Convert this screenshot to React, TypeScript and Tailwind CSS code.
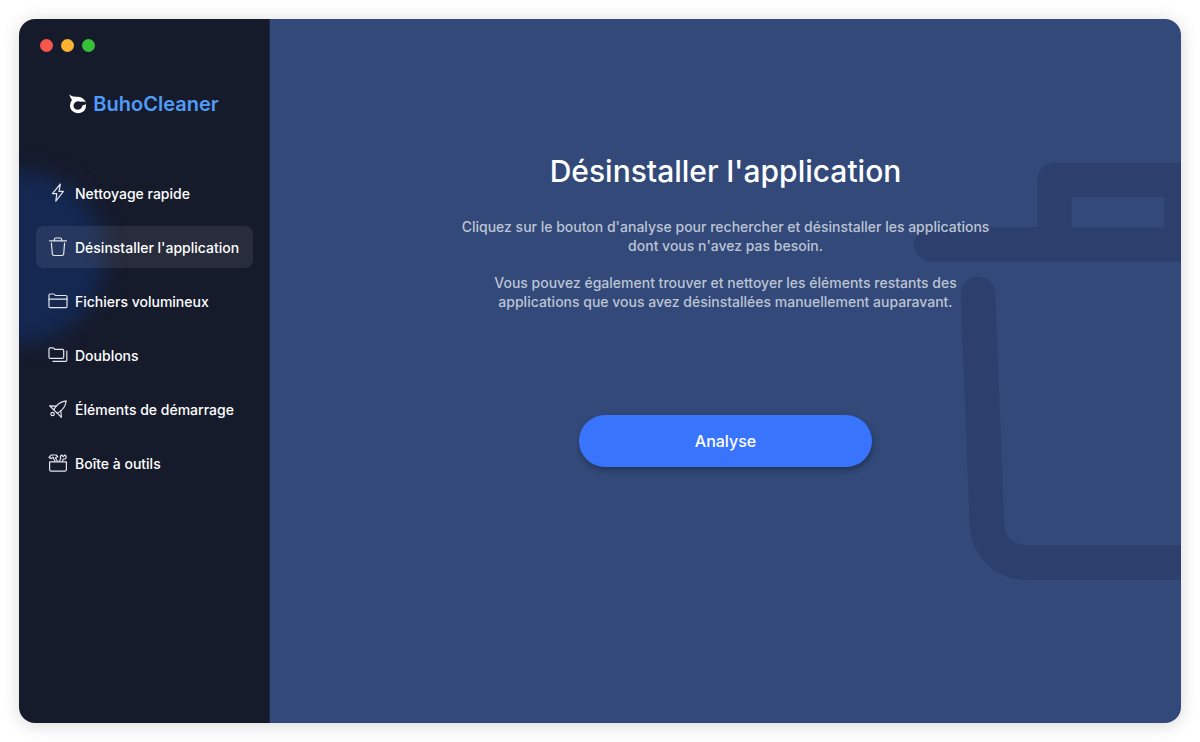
import type { ReactNode } from 'react'

interface NavItem {
  label: string
  icon: ReactNode
}

const NAV_ITEMS: NavItem[] = [
  {
    label: 'Nettoyage rapide',
    icon: <path d="M12.4 1 4.4 10.6h4.400l-1 7.600 7.600-9.800H11z" />,
  },
  {
    label: "Désinstaller l'application",
    icon: (
      <>
        <path d="M1.6 3.8h16.8M6.4 3.6V2.4Q6.4 1 7.8 1h4.400q1.400 0 1.400 1.400v1.200" />
        <path d="m3.400 6 .9 10.800q.1 1.700 1.800 1.700h7.800q1.700 0 1.800-1.700L16.600 6" />
      </>
    ),
  },
  {
    label: 'Fichiers volumineux',
    icon: (
      <>
        <path d="M1 15.400V4q0-1 1-1h3.600q.6 0 1 .5l.8 1h10.400q1.200 0 1.200 1.100v9.800q0 1.200-1.200 1.200H2.200Q1 16.600 1 15.400z" />
        <path d="M1 8.200h18" />
      </>
    ),
  },
  {
    label: 'Doublons',
    icon: (
      <>
        <path d="M1 12.200V4q0-1.200 1.200-1.200h2.700q.6 0 1 .5l.8 1h7.800q1.200 0 1.200 1.200v6.700q0 1.200-1.200 1.200H2.200Q1 13.400 1 12.200z" />
        <path d="M18.800 6v9.200q0 1.200-1.200 1.200H5" />
      </>
    ),
  },
  {
    label: 'Éléments de démarrage',
    icon: (
      <>
        <path d="M5.800 10.800Q9.400 3 18.200 1.800 17.200 10.400 9.200 14.200z" />
        <path d="M8.200 7.200 1.600 6.800l4.200 4M12.800 11.800l.6 6.600-4.200-4.200" />
        <circle cx="4.600" cy="15" r="1.700" />
      </>
    ),
  },
  {
    label: 'Boîte à outils',
    icon: (
      <>
        <path d="M1.600 8.800h16.800v7.800q0 1.600-1.600 1.600H3.200q-1.600 0-1.600-1.600z" />
        <path d="M1 4.400 3.400 2h4.800l1.600 1.600-2.400 1.200 2 3.400M1 4.400l2.200 1.200L5 4.200l2 4" />
        <path d="m11.200 8.200 1.600-2.600Q11.600 3.400 13.600 2l1.600 1.600L17 2q2.200 2.200.4 3.800l-2 .2-1 2.200" />
      </>
    ),
  },
]

function BuhoLogo() {
  return (
    <svg viewBox="0 0 18 20" className="h-5 w-[18px]" aria-hidden="true">
      <path
        fill="#fff"
        d="M.3.6Q3 3.200 8.200 2.800q6.200 0 8.800 5.600-2.600-1.600-5.200-.6Q8.800 6.600 6 8.400q-2.300 2.300-1.100 5 1.600 2.700 4.700 2.200 3.100-.6 3.900-4.200l3.500-1.200q.4 4.800-3 7.500-3.800 2.500-8.200.7Q1.300 16.400 1 11.900q-.1-3.600 2-5.900Q1 3.600.3.600z"
      />
    </svg>
  )
}

// Oversized trash can, cut off by the window's right edge
function TrashBackdrop() {
  return (
    <svg
      viewBox="0 0 267 418"
      className="pointer-events-none absolute top-[143px] right-0 h-[418px] w-[267px]"
      fill="none"
      stroke="#2d406d"
      strokeWidth="34.5"
      strokeLinecap="round"
      strokeLinejoin="round"
      aria-hidden="true"
    >
      <path d="M17.5 82.500h260M140.500 82.500V18H267.500v64.500" />
      <path d="M64 132l9 230c1 22 17 38.500 39 38.500h170" />
    </svg>
  )
}

function Sidebar() {
  return (
    <aside className="relative flex w-[251px] shrink-0 flex-col overflow-hidden border-r border-[#1d2847] bg-[#161b2c]">
      <div className="absolute top-[152px] -left-[86px] size-[172px] rounded-full bg-[#142852] blur-[10px]" />

      <div className="relative flex gap-2 px-[21px] pt-5">
        <button aria-label="Fermer" className="size-[13px] rounded-full bg-[#f7564f]" />
        <button aria-label="Réduire" className="size-[13px] rounded-full bg-[#fbb231]" />
        <button aria-label="Agrandir" className="size-[13px] rounded-full bg-[#36c138]" />
      </div>

      <div className="relative mt-[38px] flex h-7 items-center justify-center gap-1.5">
        <BuhoLogo />
        <span className="text-[20px] font-semibold text-[#519bf8]">BuhoCleaner</span>
      </div>

      <nav className="relative mt-[54px] flex flex-col gap-3 pr-4 pl-[17px]">
        {NAV_ITEMS.map((item, i) => (
          <button
            key={item.label}
            className={
              i === 1
                ? 'flex h-[42px] items-center gap-[7px] rounded-lg bg-white/8 px-3 text-left'
                : 'flex h-[42px] items-center gap-[7px] rounded-lg px-3 text-left'
            }
          >
            <svg
              viewBox="0 0 20 20"
              className="size-5 shrink-0"
              fill="none"
              stroke="#e4e6ec"
              strokeWidth="1.2"
              strokeLinecap="round"
              strokeLinejoin="round"
              aria-hidden="true"
            >
              {item.icon}
            </svg>
            <span className="text-[14px] font-medium whitespace-nowrap text-white">{item.label}</span>
          </button>
        ))}
      </nav>
    </aside>
  )
}

export default function App() {
  return (
    <div className="flex min-h-screen bg-white p-[19px] font-['Inter',sans-serif]">
      <div className="flex flex-1 overflow-hidden rounded-2xl shadow-[0_2px_18px_rgba(0,0,0,0.16)]">
        <Sidebar />

        <main className="relative flex flex-1 flex-col items-center overflow-hidden bg-[#324979] px-8 pt-[132px] text-center">
          <TrashBackdrop />

          <h1 className="relative text-[30px] leading-10 font-medium text-white">Désinstaller l'application</h1>

          <div className="relative mt-[26px] flex flex-col gap-[18px] text-[14px] leading-[19px] font-medium text-[#bdc4d4]">
            <p>
              Cliquez sur le bouton d'analyse pour rechercher et désinstaller les applications
              <br />
              dont vous n'avez pas besoin.
            </p>
            <p>
              Vous pouvez également trouver et nettoyer les éléments restants des
              <br />
              applications que vous avez désinstallées manuellement auparavant.
            </p>
          </div>

          <button className="relative mt-[104px] h-[52px] w-[293px] rounded-full bg-[#3974fd] text-[16px] font-medium text-white shadow-[1px_3px_6px_rgba(0,0,0,0.3)]">
            Analyse
          </button>
        </main>
      </div>
    </div>
  )
}
